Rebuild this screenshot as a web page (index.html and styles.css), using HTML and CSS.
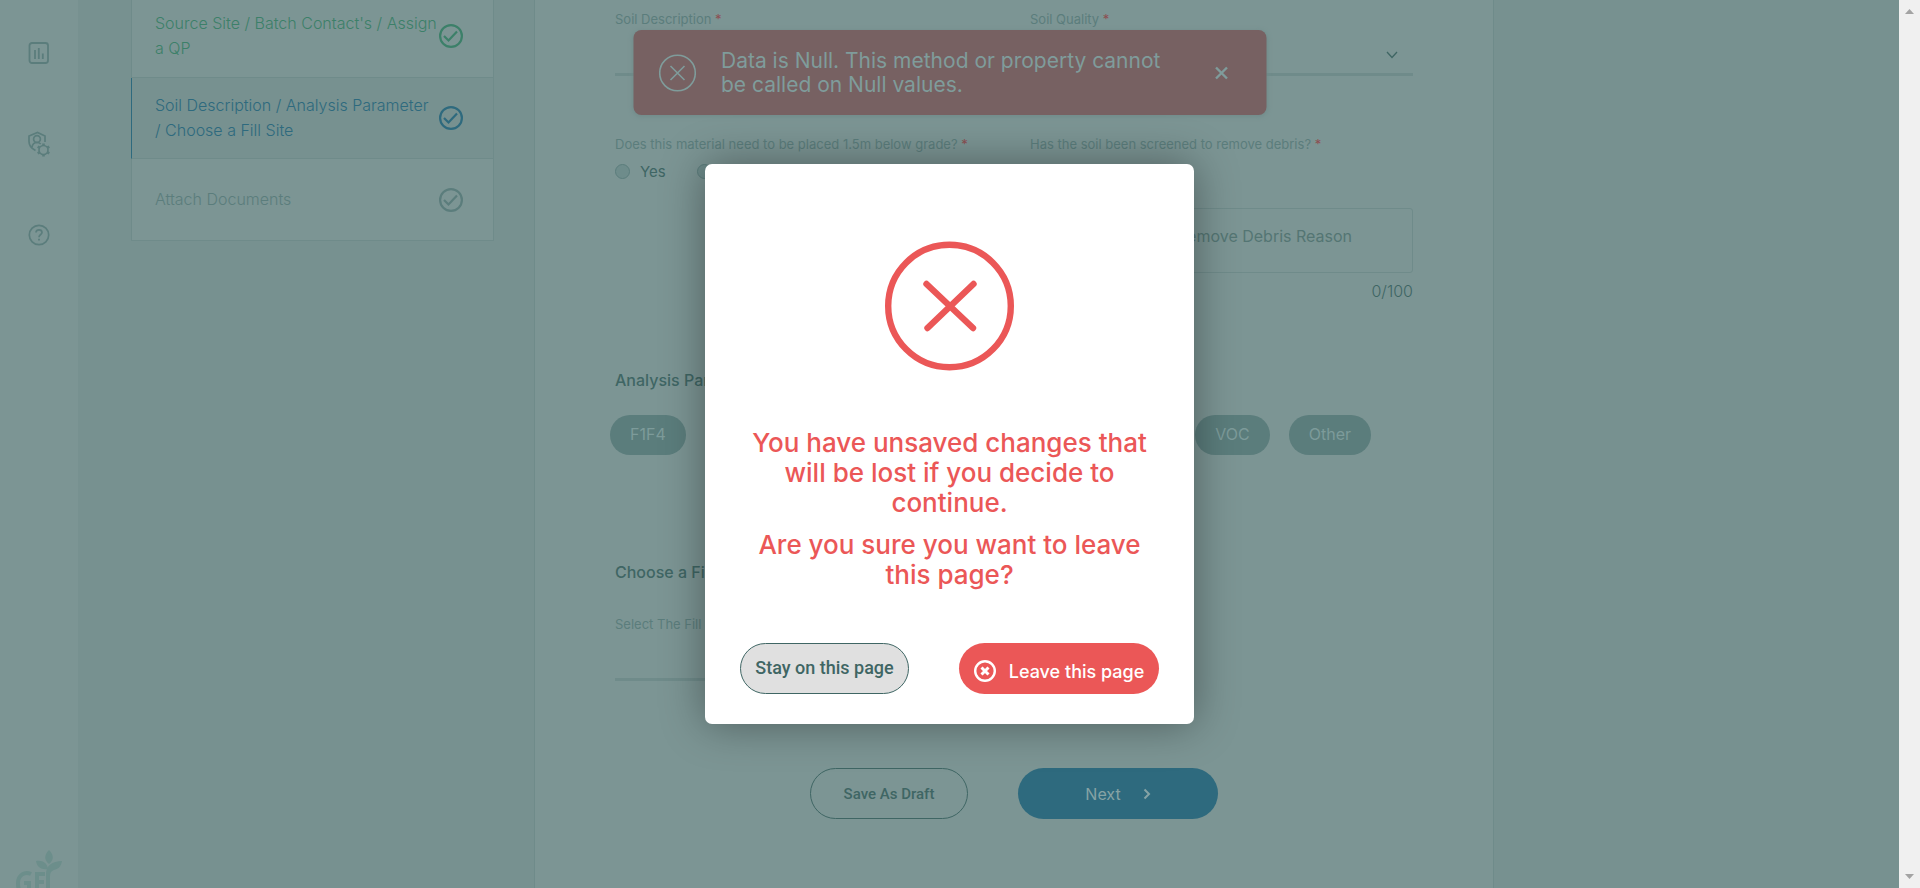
FILE: index.html
```html
<!DOCTYPE html>
<html lang="en">
<head>
<meta charset="utf-8">
<title>Soil Description</title>
<link rel="stylesheet" href="styles.css">
</head>
<body>
<div class="app">
  <nav class="rail" aria-label="Main">
    <a class="rail-link" href="#reports" aria-label="Reports">
      <svg width="22" height="22" viewBox="0 0 22 22" fill="none" stroke="currentColor" stroke-width="1.8"><rect x="1.500" y="1" width="18.500" height="20" rx="2.500"/><path d="M7 8v9M10.800 6v11M14.800 11.500v5.500"/></svg>
    </a>
    <a class="rail-link" href="#admin" aria-label="Administration">
      <svg width="24" height="26" viewBox="0 0 24 26" fill="none" stroke="currentColor"><g stroke-width="1.700"><path d="M8.500 19.500C4.500 17.500 2 14.500 2 10.500V5l8.500-3.500L18 5v6"/><circle cx="10" cy="8" r="3.400"/><path d="M5 16c.5-3 2.500-4.500 5-4.500 1.500 0 2.800.5 3.700 1.500"/><circle cx="16.500" cy="19" r="4.500"/></g><path stroke-width="2.600" d="M16.500 14.500v-2M16.500 23.500v2M12.600 16.700l-1.900-1.100M20.400 21.300l1.900 1.100M12.600 21.300l-1.900 1.100M20.400 16.700l1.900-1.100"/></svg>
    </a>
    <a class="rail-link" href="#help" aria-label="Help">
      <svg width="22" height="22" viewBox="0 0 22 22" fill="none" stroke="currentColor" stroke-width="1.700"><circle cx="11" cy="11" r="9.700"/><path d="M8 8.500C8 6.800 9.300 5.800 11 5.800s3 1 3 2.600c0 2-3 2.300-3 4.800"/><path stroke-width="1.900" d="M11 14.800v1.800"/></svg>
    </a>
    <svg class="logo" width="50" height="38" viewBox="0 0 50 38" fill="currentColor" role="img" aria-label="GFI"><path d="M35 0c5 5 5 10 0 14-5-4-5-9 0-14z"/><path d="M22 11c7-1 11 2 12 8-7 1-11-2-12-8z"/><path d="M48 11c-1 6-4 8-8 9-3 1-4 3-4 6v12h-4V24c0-8 6-13 16-13z"/><path d="M17 24c-6-3-13 1-13 9 0 2 0 4 1 7M17 33h-7M15 33v7M31 24h-8v16M23 32h7" fill="none" stroke="currentColor" stroke-width="4"/></svg>
  </nav>

  <div class="workspace">
    <ol class="steps">
      <li class="step step-done">
        <span>Source Site / Batch Contact's / Assign a QP</span>
        <svg class="tick" viewBox="0 0 24 24"><circle cx="12" cy="12" r="10.900"/><path d="M5 12l4.500 4.500L18 7.500"/></svg>
      </li>
      <li class="step step-active">
        <span>Soil Description / Analysis Parameter /&nbsp;Choose a Fill Site</span>
        <svg class="tick" viewBox="0 0 24 24"><circle cx="12" cy="12" r="10.900"/><path d="M5 12l4.500 4.500L18 7.500"/></svg>
      </li>
      <li class="step">
        <span>Attach Documents</span>
        <svg class="tick" viewBox="0 0 24 24"><circle cx="12" cy="12" r="10.900"/><path d="M5 12l4.500 4.500L18 7.500"/></svg>
      </li>
    </ol>

    <main class="panel">
      <form>
        <div class="columns">
          <div class="field">
            <label class="label" for="soil">Soil Description <b>*</b></label>
            <select class="select" id="soil"><option></option></select>
          </div>
          <div class="field">
            <label class="label" for="quality">Soil Quality <b>*</b></label>
            <div class="select-wrap">
              <select class="select" id="quality"><option></option></select>
              <svg class="chevron" width="12" height="8" viewBox="0 0 12 8"><path d="M1 1l5 5.500L11 1"/></svg>
            </div>
          </div>
          <fieldset class="field">
            <legend class="label">Does this material need to be placed 1.5m below grade? <b>*</b></legend>
            <div class="radios">
              <label><input type="radio" name="grade">Yes</label>
              <label><input type="radio" name="grade">No</label>
            </div>
          </fieldset>
          <div class="field">
            <fieldset>
              <legend class="label">Has the soil been screened to remove debris? <b>*</b></legend>
              <div class="radios">
                <label><input type="radio" name="debris">Yes</label>
                <label><input type="radio" name="debris">No</label>
              </div>
            </fieldset>
            <textarea class="reason" aria-label="Remove Debris Reason" placeholder="Remove Debris Reason"></textarea>
            <div class="counter">0/100</div>
          </div>
        </div>

        <h2 class="heading">Analysis Parameter</h2>
        <div class="chips">
          <button type="button" class="chip">F1F4</button>
          <button type="button" class="chip chip-wide">Metals</button>
          <button type="button" class="chip chip-wide">PAH</button>
          <button type="button" class="chip chip-wide">PCB</button>
          <button type="button" class="chip">VOC</button>
          <button type="button" class="chip">Other</button>
        </div>

        <h2 class="heading heading-site">Choose a Fill Site</h2>
        <div class="columns">
          <div class="field">
            <label class="label" for="site">Select The Fill Site</label>
            <select class="select" id="site"><option></option></select>
          </div>
        </div>

        <div class="actions">
          <button type="button" class="btn btn-outline">Save As Draft</button>
          <button type="button" class="btn btn-next">Next
            <svg width="8" height="12" viewBox="0 0 8 12"><path d="M1.500 1.500L6 6l-4.500 4.500"/></svg>
          </button>
        </div>
      </form>
    </main>
  </div>

  <div class="scrollbar" aria-hidden="true">
    <svg width="9" height="5" viewBox="0 0 9 5"><path d="M0 5L4.500 0 9 5z"/></svg>
    <svg width="9" height="5" viewBox="0 0 9 5"><path d="M0 0h9L4.500 5z"/></svg>
  </div>

  <div class="toast" role="alert">
    <svg class="toast-icon" width="38" height="38" viewBox="0 0 38 38"><circle cx="19" cy="19" r="17.800"/><path d="M12 12l14 14M26 12L12 26"/></svg>
    <p>Data is Null. This method or property cannot be called on Null values.</p>
    <button type="button" class="toast-close" aria-label="Close">
      <svg width="14" height="14" viewBox="0 0 14 14"><path d="M1.500 1.500l11 11M12.500 1.500l-11 11"/></svg>
    </button>
  </div>

  <div class="overlay">
    <section class="modal" role="alertdialog" aria-modal="true" aria-labelledby="modal-title">
      <svg class="modal-icon" width="130" height="130" viewBox="0 0 130 130"><circle cx="64.500" cy="65" r="61.300"/><path d="M41.500 43l46.500 44M88.500 43L42.500 87"/></svg>
      <h1 class="modal-text" id="modal-title">You have unsaved changes that will be lost if you decide to continue.</h1>
      <p class="modal-text">Are you sure you want to leave this page?</p>
      <div class="modal-actions">
        <button type="button" class="btn btn-stay">Stay on this page</button>
        <button type="button" class="btn btn-leave">
          <svg width="22" height="22" viewBox="0 0 22 22"><circle cx="11" cy="11" r="9.800" stroke-width="2.400"/><path stroke-width="3" d="M7.500 7.500l7 7M14.500 7.500l-7 7"/></svg>
          Leave this page
        </button>
      </div>
    </section>
  </div>
</div>
</body>
</html>
```
FILE: styles.css
```css
:root {
  --surface: #7c9594;
  --ground: #779190;
  --line: #6f8b8a;
  --muted: #5b7d7c;
  --ink: #3f6664;
  --green: #3c8069;
  --blue: #2e6a7e;
  --red: #eb5757;
  --brick: #776162;
  --bar: 21px;
}

* { box-sizing: border-box; }

body {
  margin: 0;
  font-family: Inter, "Open Sans", sans-serif;
  font-size: 16px;
  color: var(--ink);
  background: var(--ground);
}

button, select, textarea { font: inherit; color: inherit; }
fieldset { border: 0; margin: 0; padding: 0; min-width: 0; }
svg { flex: none; }

.app {
  position: relative;
  display: flex;
  height: 100vh;
  overflow: hidden;
}

.rail {
  display: flex;
  flex-direction: column;
  align-items: center;
  width: 78px;
  padding-top: 40px;
  background: var(--surface);
}
.rail-link {
  display: flex;
  align-items: center;
  height: 26px;
  margin-bottom: 65px;
  color: var(--muted);
}
.logo { margin-top: auto; color: #6c8e8b; }

.workspace {
  flex: 1;
  display: flex;
  align-items: flex-start;
  gap: 40px;
  padding-left: 53px;
}

.steps {
  width: 363px;
  margin: 0;
  padding: 0;
  list-style: none;
  border: 1px solid var(--line);
  border-top: 0;
  background: var(--surface);
  color: var(--muted);
  font-size: 16px;
  font-weight: 300;
  line-height: 25px;
}
.step {
  display: flex;
  align-items: center;
  justify-content: space-between;
  height: 81px;
  padding: 0 30px 0 23px;
  border-bottom: 1px solid var(--line);
}
.step span { flex: 1; }
.step:first-child { height: 78px; padding-bottom: 5px; }
.step:last-child { border-bottom: 0; }
.step-done { color: var(--green); }
.step-active {
  margin-left: -1px;
  border-left: 1px solid var(--blue);
  background: var(--ground);
  color: var(--blue);
}
.tick {
  width: 24px;
  height: 24px;
  fill: none;
  stroke: currentColor;
  stroke-width: 2.2;
}

.panel {
  width: 960px;
  min-height: 100vh;
  padding: 9px 80px 0;
  border: solid var(--line);
  border-width: 0 1px;
  background: var(--surface);
}
.columns {
  display: grid;
  grid-template-columns: 1fr 1fr;
  gap: 58px 32px;
}
.label {
  display: block;
  padding: 0;
  height: 20px;
  font-size: 13px;
  line-height: 20px;
  color: var(--muted);
}
.label b { font-weight: 400; color: #8d4f52; }
.select-wrap { position: relative; }
.select {
  display: block;
  width: 100%;
  height: 47px;
  appearance: none;
  border: 0;
  border-bottom: 3px solid var(--line);
  border-radius: 0;
  background: transparent;
}
.chevron {
  position: absolute;
  top: 22px;
  right: 15px;
  fill: none;
  stroke: var(--ink);
  stroke-width: 1.3;
}
.radios {
  display: flex;
  align-items: center;
  gap: 31px;
  height: 34px;
  font-size: 15px;
}
.radios label { display: flex; align-items: center; gap: 10px; }
.radios input {
  appearance: none;
  width: 15px;
  height: 15px;
  margin: 0;
  border: 1px solid var(--muted);
  border-radius: 50%;
  background: #6e8c8b;
}
.reason {
  display: block;
  width: 100%;
  height: 65px;
  margin-top: 20px;
  padding: 17px 60px 0 20px;
  border: 1px solid var(--line);
  border-radius: 3px;
  background: transparent;
  font-size: 16px;
  line-height: 20px;
  text-align: right;
  resize: none;
}
.reason::placeholder { color: #547573; }
.counter {
  margin-top: 8px;
  font-size: 16px;
  font-weight: 300;
  line-height: 20px;
  text-align: right;
}
.heading {
  margin: 67px 0 0;
  font-size: 16px;
  font-weight: 500;
  line-height: 24px;
}
.chips {
  display: flex;
  gap: 19px;
  margin: 23px 42px 0 -5px;
}
.chip {
  height: 40px;
  padding: 0 20px 2px;
  border: 0;
  border-radius: 20px;
  background: var(--muted);
  color: #7d9b9a;
  font-size: 16px;
}
.chip-wide { flex: 1; }
.heading-site { margin: 105px 0 30px; }

.actions {
  display: flex;
  justify-content: center;
  gap: 50px;
  margin-top: 87px;
}
.btn {
  display: flex;
  align-items: center;
  justify-content: center;
  height: 51px;
  padding: 0;
  border: 0;
  border-radius: 26px;
}
.btn svg {
  fill: none;
  stroke: currentColor;
  stroke-width: 2;
}
.btn-outline {
  width: 158px;
  border: 1px solid var(--ink);
  background: transparent;
  font: 500 15px Roboto, sans-serif;
}
.btn-next {
  gap: 22px;
  width: 200px;
  background: var(--blue);
  color: #86a3a5;
  font-size: 16px;
}

.scrollbar {
  position: relative;
  z-index: 3;
  display: flex;
  flex-direction: column;
  align-items: center;
  justify-content: space-between;
  width: var(--bar);
  padding: 9px 0;
  background: #f0f0f0;
  fill: #a3a3a3;
}

.toast {
  position: absolute;
  top: 30px;
  left: calc((100% - var(--bar)) / 2);
  transform: translateX(-50%);
  display: flex;
  align-items: center;
  width: 633px;
  min-height: 85px;
  padding: 0 38px 0 25px;
  border-radius: 8px;
  background: var(--brick);
  color: #7f9c9b;
  font-size: 21px;
  line-height: 24px;
  box-shadow: 0 1px 5px #6f8988;
}
.toast svg { fill: none; stroke: currentColor; stroke-width: 1.6; }
.toast p { flex: 1; margin: 0 0 0 25px; padding-right: 36px; }
.toast-close {
  display: flex;
  padding: 0;
  border: 0;
  background: none;
}
.toast .toast-close svg { stroke-width: 2.4; }

.overlay {
  position: absolute;
  inset: 0 var(--bar) 0 0;
  display: flex;
  align-items: center;
  justify-content: center;
}
.modal {
  width: 489px;
  padding: 77px 35px 30px;
  border-radius: 7px;
  background: #fff;
  color: var(--red);
  text-align: center;
  box-shadow: 0 0 44px rgba(0, 0, 0, .38);
}
.modal-icon {
  display: block;
  margin: 0 auto 57px;
  fill: none;
  stroke: currentColor;
  stroke-width: 6.4;
  stroke-linecap: round;
}
.modal-text {
  margin: 0 0 12px;
  font-size: 26px;
  font-weight: 500;
  line-height: 30px;
}
.modal-actions {
  display: flex;
  justify-content: space-between;
  margin-top: 53px;
}
.btn-stay {
  width: 169px;
  padding-bottom: 2px;
  border: 1px solid var(--ink);
  background: #e0e0e0;
  color: var(--ink);
  font: 500 18px Roboto, sans-serif;
}
.btn-leave {
  gap: 13px;
  width: 200px;
  padding-top: 5px;
  background: var(--red);
  color: #fff;
  font-size: 18px;
  font-weight: 500;
}
```
